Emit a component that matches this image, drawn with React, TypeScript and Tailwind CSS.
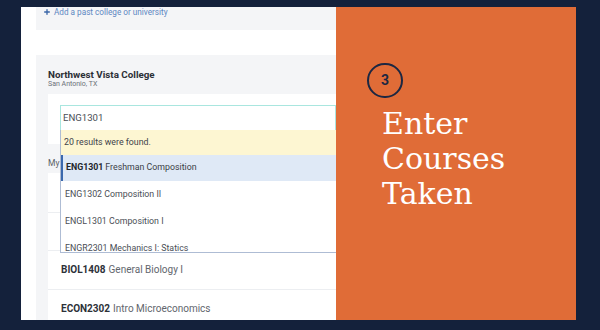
import { Plus } from 'lucide-react';

const dropdown = [
  { code: 'ENG1302', name: 'Composition II' },
  { code: 'ENGL1301', name: 'Composition I' },
  { code: 'ENGR2301', name: 'Mechanics I: Statics' },
];

const taken = [
  { code: 'BIOL1408', name: 'General Biology I' },
  { code: 'ECON2302', name: 'Intro Microeconomics' },
];

export default function App() {
  return (
    <div className="w-[600px] h-[330px] bg-[#14213b] pt-[7px] pl-[21px] overflow-hidden font-['Roboto',sans-serif]">
      <div className="flex h-[313px]">
        {/* app screenshot side */}
        <div className="relative w-[315px] h-full bg-white overflow-hidden">
          <div className="ml-[15px] h-[23px] bg-[#f4f5f7] flex items-start pl-[7px]">
            <span className="flex items-center gap-[3px] text-[8.2px] text-[#5d87c2] leading-[10px]">
              <Plus size={8} strokeWidth={4} className="text-[#3a66a8]" />
              Add a past college or university
            </span>
          </div>

          <div className="ml-[15px] mt-[25px] h-[270px] bg-[#f4f5f7]">
            <div className="pl-[12px] pt-[14px]">
              <p className="text-[9.8px] font-bold text-[#2b2f36] leading-[11px]">Northwest Vista College</p>
              <p className="text-[7px] text-[#6b7078] leading-[8px]">San Antonio, TX</p>
            </div>

            <div className="ml-[12px] mt-[6px] h-[50px] bg-white pl-[12px] pt-[11px]">
              <div className="h-[26px] border border-[#a9e6df] flex items-center pl-[2px] text-[9.6px] text-[#4a4e55]">
                ENG1301
              </div>
            </div>

            <p className="pl-[12px] mt-[14px] text-[8.5px] text-[#5a5f66] leading-[10px]">My</p>

            <div className="ml-[12px] mt-[5px] bg-white">
              {[0, 1, 2, 3].map(i => {
                const t = i >= 2 ? taken[i - 2] : null;
                return (
                  <div key={i} className={`h-[38.5px] flex items-center pl-[13px] text-[10px] ${i > 0 ? 'border-t border-[#eceef1]' : ''}`}>
                    {t && (
                      <>
                        <span className="font-bold text-[#2d3138]">{t.code}</span>
                        <span className="ml-[3px] text-[#62666d]">{t.name}</span>
                      </>
                    )}
                  </div>
                );
              })}
            </div>
          </div>

          {/* autocomplete dropdown overlay */}
          <div className="absolute left-[39px] top-[123px] w-[290px] h-[123px] border-l border-b border-[#aebcd4] bg-white overflow-hidden">
            <div className="h-[25px] bg-[#fdf6d2] flex items-center pl-[3px] text-[8.8px] text-[#3e4249]">
              20 results were found.
            </div>
            <div className="h-[26px] bg-[#dfe9f6] border-l-2 border-[#3a68ad] flex items-center pl-[3px] text-[8.8px] text-[#3b3f46]">
              <span className="font-bold text-[#22262c]">ENG1301</span>
              <span className="ml-[2px]">Freshman Composition</span>
            </div>
            {dropdown.map(d => (
              <div key={d.code} className="h-[27px] flex items-center pl-[4px] text-[8.8px] text-[#4a4e55]">
                {d.code} {d.name}
              </div>
            ))}
          </div>
        </div>

        {/* orange step panel */}
        <div className="w-[240px] h-full bg-[#e06c37] pt-[56px] pl-[31px]">
          <div className="w-[36px] h-[35px] rounded-full border-2 border-[#1c2742] flex items-center justify-center text-[14px] font-bold text-[#1c2742]">
            3
          </div>
          <h1 className="ml-[15px] mt-[8px] font-['DejaVu_Serif',serif] text-[30px] leading-[35px] text-white font-normal">
            Enter
            <br />
            Courses
            <br />
            Taken
          </h1>
        </div>
      </div>
    </div>
  );
}
